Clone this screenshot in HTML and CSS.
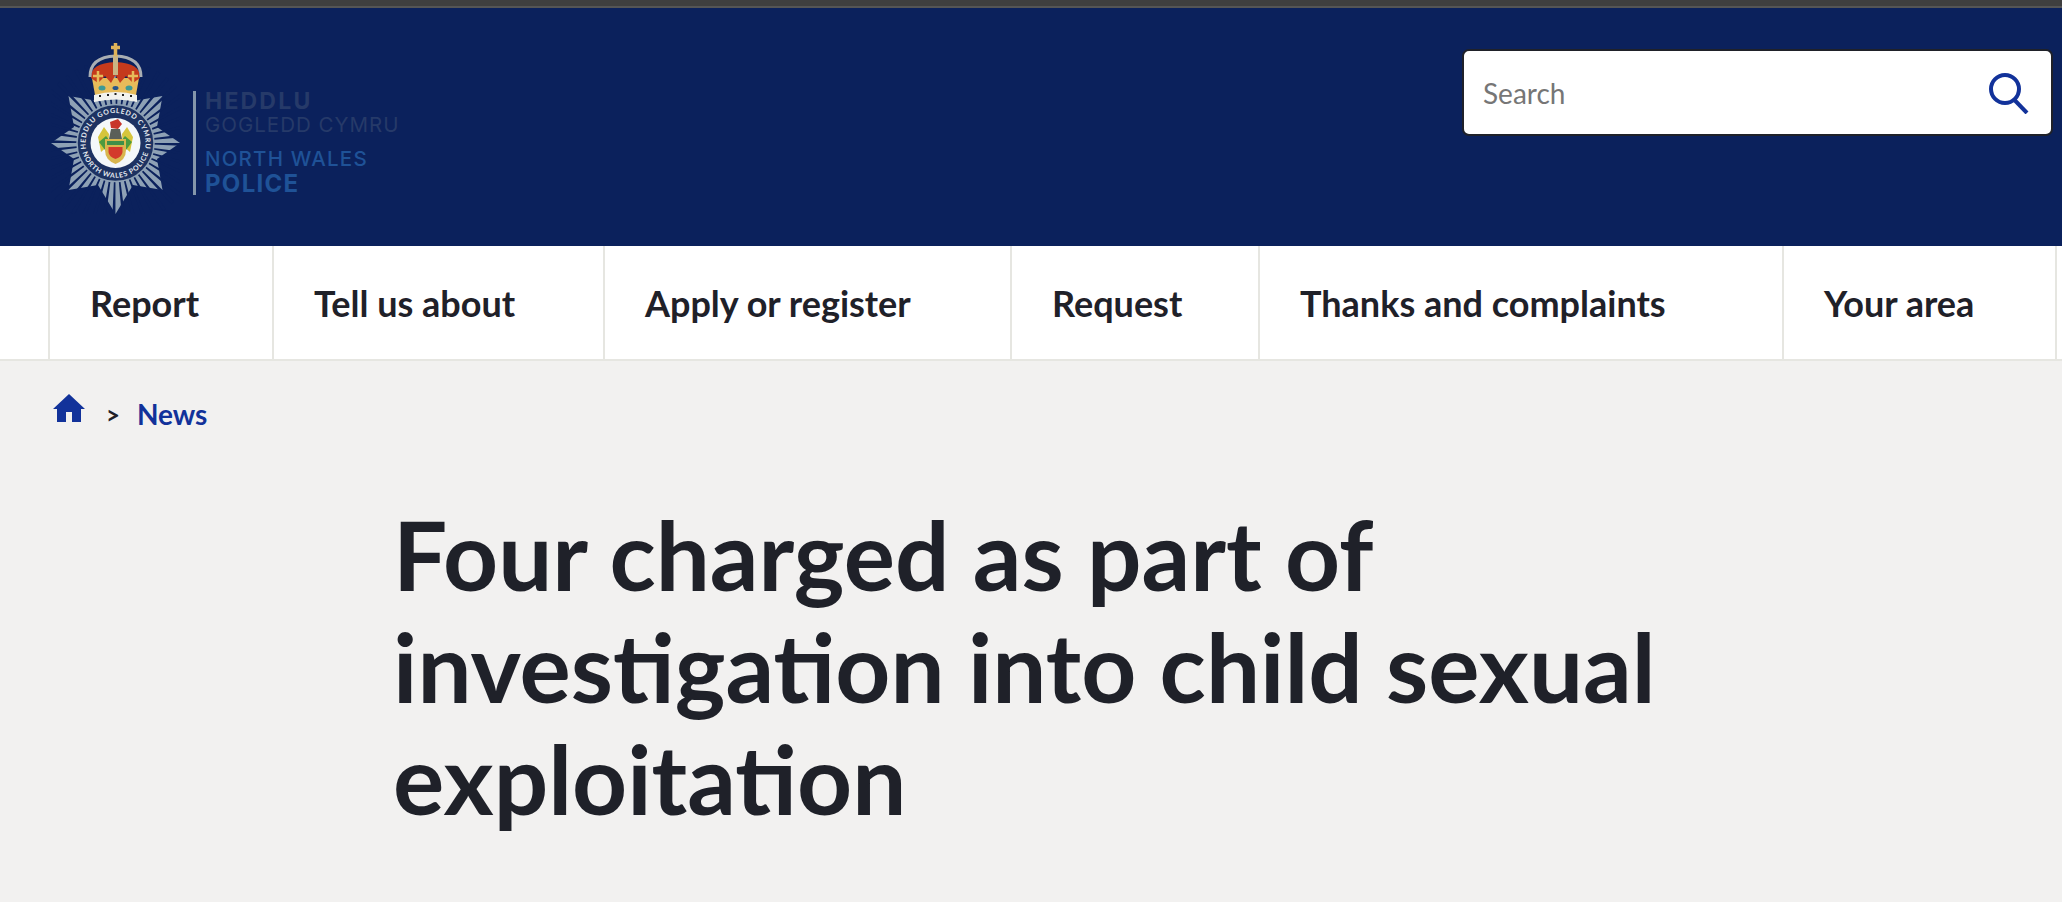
FILE: index.html
```html
<!DOCTYPE html>
<html lang="en">
<head>
<meta charset="utf-8">
<title>Four charged as part of investigation into child sexual exploitation</title>
<link rel="stylesheet" href="styles.css">
</head>
<body>
<div class="topstrip"></div>
<header class="masthead">
  <a class="logo" href="#">
    <svg class="badge" viewBox="-1 0 129 172" width="129" height="172" aria-hidden="true">
      <defs>
        <path id="arcTop" d="M37.500 116 A30 30 0 1 1 89.500 116"/>
        <path id="arcBot" d="M30.500 110 A34 34 0 0 0 96.500 110"/>
      </defs>
      <polygon class="star" points="63.500,31 81,59 110.500,54 105,85 128,101 105,117 110.500,148 81,143 63.500,172 46,143 16.500,148 22,117 -1,101 22,85 16.500,54 46,59"/>
      <circle class="rays" cx="63.500" cy="101" r="52"/>
      <circle class="ring" cx="63.500" cy="101" r="38.500"/>
      <text class="ringtext"><textPath href="#arcTop" startOffset="50%">HEDDLU GOGLEDD CYMRU</textPath></text>
      <text class="ringtext"><textPath href="#arcBot" startOffset="50%">NORTH WALES POLICE</textPath></text>
      <circle class="disc" cx="63.500" cy="101" r="25"/>
      <path class="mantle-y" d="M46 95 L52 85 L57 92 L56 104 L49 110 Z"/>
      <path class="mantle-y" d="M81 95 L75 85 L70 92 L71 104 L78 110 Z"/>
      <path class="mantle-g" d="M47 100 L54 94 L58 99 L53 108 Z"/>
      <path class="mantle-g" d="M80 100 L73 94 L69 99 L74 108 Z"/>
      <path class="dragon-red" d="M58 80 L66 77 L70 82 L66 87 L59 86 Z"/>
      <path class="dragon" d="M59 87 H68 L70 97 H57 Z"/>
      <path class="shield" d="M53 97 H74 V108 Q74 118 63.500 122 Q53 118 53 108 Z"/>
      <path class="shield-green" d="M55 99 H72 V103 H55 Z"/>
      <path class="shield-red" d="M56.500 105 H70.500 V110 Q70 115 63.500 117 Q57 115 56.500 110 Z"/>
      <path class="crown-gold" d="M40 36 L87 36 L84 53 L43 53 Z"/>
      <path class="crown-red" d="M39 36 Q38 21 63.500 20 Q89 21 88 36 L81 41 L74 34 L68 41 L63.500 33 L59 41 L53 34 L46 41 Z"/>
      <path class="fleur" d="M46 42 V29 M41 34 H51 M63.500 33 V20 M81 42 V29 M76 34 H86"/>
      <path class="crown-arch" d="M38 35 Q38 15 63.500 14 Q89 15 89 35"/>
      <path class="crown-mid" d="M63.500 13 V33"/>
      <path class="crown-cross" d="M63.500 1 V14 M59 5.500 H68"/>
      <path class="crown-base" d="M42 53 Q63.500 47 85 53 L85 60 Q63.500 55 42 60 Z"/>
      <path class="ermine" d="M48 53 V55 M56 52 V54 M63.500 51 V53 M71 52 V54 M79 53 V55"/>
      <ellipse class="gem" cx="50" cy="46" rx="3.500" ry="2.500"/>
      <ellipse class="gem" cx="77" cy="46" rx="3.500" ry="2.500"/>
      <ellipse class="gem-dark" cx="63.500" cy="46" rx="3" ry="2"/>
    </svg>
    <span class="rule"></span>
    <span class="wordmark">
      <span class="wm wm-cy-b">HEDDLU</span>
      <span class="wm wm-cy">GOGLEDD CYMRU</span>
      <span class="wm wm-en">NORTH WALES</span>
      <span class="wm wm-en-b">POLICE</span>
    </span>
  </a>
  <form class="search">
    <span class="placeholder">Search</span>
    <svg class="search-icon" viewBox="0 0 42 42" width="42" height="42" aria-hidden="true"><circle cx="17" cy="17" r="14"/><path d="M26.500 28 L39 41"/></svg>
  </form>
</header>
<nav class="mainnav">
  <a href="#">Report</a>
  <a href="#">Tell us about</a>
  <a href="#">Apply or register</a>
  <a href="#">Request</a>
  <a href="#">Thanks and complaints</a>
  <a href="#">Your area</a>
</nav>
<main class="content">
  <div class="crumbs">
    <svg class="home" viewBox="0 0 34 30" width="34" height="30" aria-hidden="true"><path d="M17 1 L33 16 H29 V29 H20 V19 H14 V29 H5 V16 H1 Z"/></svg>
    <span class="sep">&gt;</span>
    <a href="#">News</a>
  </div>
  <h1>Four charged as part of investigation into child sexual exploitation</h1>
</main>
</body>
</html>
```
FILE: styles.css
```css
* { box-sizing: border-box; }
html, body { margin: 0; height: 100%; overflow: hidden; }
body { background: #f2f1f0; color: #1f2129; font-family: Lato, "Liberation Sans", sans-serif; }
a { text-decoration: none; color: inherit; }
.topstrip { height: 8px; background: #3f3f3f; border-bottom: 2px solid #555; }
.masthead { height: 238px; background: #0b215c; display: flex; justify-content: space-between; align-items: flex-start; padding: 33px 9px 0 50px; }
.logo { display: flex; align-items: flex-start; }
.badge { display: block; margin: 1px 0 0 1px; }
.star { fill: #8ea1b5; }
.rays { fill: none; stroke: #0b215c; stroke-width: 62; stroke-dasharray: 2.200 4.600; }
.ring { fill: #1d3262; stroke: #8ea1b5; stroke-width: 1.500; }
.ringtext { fill: #e6ebf0; font: bold 7px Lato, sans-serif; text-anchor: middle; letter-spacing: .7px; }
.disc { fill: #f4f8fa; }
.shield { fill: #d9b64e; }
.shield-green { fill: #3f8f48; }
.shield-red { fill: #d33a2c; }
.dragon { fill: #5a5f58; }
.dragon-red { fill: #c8352b; }
.mantle-y { fill: #d6c53c; }
.mantle-g { fill: #4d9a3f; }
.crown-gold { fill: #e6bb5a; }
.crown-red { fill: #c53a1c; }
.fleur { stroke: #e6bb5a; stroke-width: 2.500; fill: none; }
.crown-arch { fill: none; stroke: #a9aeb3; stroke-width: 3; }
.crown-mid { stroke: #c9b484; stroke-width: 5; }
.crown-cross { stroke: #e0b35a; stroke-width: 3.500; fill: none; }
.crown-base { fill: #f2f2ee; }
.ermine { stroke: #222; stroke-width: 2; }
.gem { fill: #3c9a96; }
.gem-dark { fill: #26558a; }
.rule { width: 3px; height: 104px; margin: 50px 0 0 13px; background: #8496aa; }
.wordmark { display: flex; flex-direction: column; margin: 48px 0 0 9px; }
.wm { display: block; font-family: Inter, "Liberation Sans", sans-serif; white-space: nowrap; }
.wm-cy-b { font-size: 23px; line-height: 24px; font-weight: 700; color: #263a69; letter-spacing: 2.200px; }
.wm-cy { font-size: 20.500px; line-height: 24px; font-weight: 400; color: #263a69; letter-spacing: 1px; }
.wm-en { margin-top: 10px; font-size: 20.500px; line-height: 24px; font-weight: 500; color: #1f5297; letter-spacing: 1.200px; }
.wm-en-b { font-size: 24px; line-height: 26px; font-weight: 700; color: #1f5297; letter-spacing: 1.300px; }
.search { width: 591px; height: 87px; margin-top: 8px; background: #fff; border: 2px solid #1f2129; border-radius: 7px; display: flex; align-items: center; justify-content: space-between; padding: 0 21px 0 19px; }
.placeholder { font-size: 28px; color: #767676; }
.search-icon { display: block; }
.search-icon circle, .search-icon path { fill: none; stroke: #12329a; stroke-width: 4; }
.mainnav { height: 115px; padding-left: 48px; background: #fff; border-bottom: 2px solid #e6e6e1; display: grid; grid-template-columns: 224px 331px 407px 248px 524px 275px; }
.mainnav a { display: flex; align-items: center; padding: 0 0 0 40px; border-left: 2px solid #e6e6e1; font-size: 36px; font-weight: 700; color: #1f2129; white-space: nowrap; }
.mainnav a:last-child { border-right: 2px solid #e6e6e1; }
.content { padding: 0 50px; }
.crumbs { display: flex; align-items: center; height: 60px; margin-top: 23px; }
.home { display: block; margin: -12px 0 0 2px; fill: #12329a; }
.sep { margin: 0 17px 0 20px; font-size: 24px; font-weight: 700; }
.crumbs a { color: #12329a; font-size: 28px; font-weight: 700; }
h1 { margin: 54px 0 0 343px; width: 1340px; font-size: 96px; line-height: 112px; font-weight: 700; color: #1f2129; }
```
